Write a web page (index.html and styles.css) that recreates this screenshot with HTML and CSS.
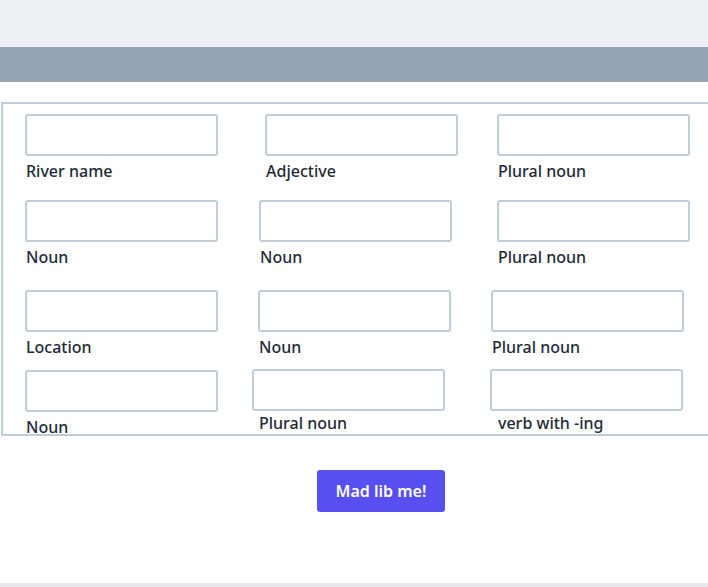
FILE: index.html
```html
<!DOCTYPE html>
<html>
<head>
<meta charset="utf-8">
<link rel="stylesheet" href="styles.css">
</head>
<body>
<div class="top"></div>
<div class="bar"></div>
<main class="main">
  <form class="box">
    <div class="row r1">
      <div class="field f1"><input class="inp" type="text"><label class="lab">River name</label></div>
      <div class="field f2"><input class="inp" type="text"><label class="lab">Adjective</label></div>
      <div class="field f3"><input class="inp" type="text"><label class="lab">Plural noun</label></div>
    </div>
    <div class="row r2">
      <div class="field f1"><input class="inp" type="text"><label class="lab">Noun</label></div>
      <div class="field f2"><input class="inp" type="text"><label class="lab">Noun</label></div>
      <div class="field f3"><input class="inp" type="text"><label class="lab">Plural noun</label></div>
    </div>
    <div class="row r3">
      <div class="field f1"><input class="inp" type="text"><label class="lab">Location</label></div>
      <div class="field f2"><input class="inp" type="text"><label class="lab">Noun</label></div>
      <div class="field f3"><input class="inp" type="text"><label class="lab">Plural noun</label></div>
    </div>
    <div class="row r4">
      <div class="field f1"><input class="inp" type="text"><label class="lab">Noun</label></div>
      <div class="field f2"><input class="inp" type="text"><label class="lab">Plural noun</label></div>
      <div class="field f3"><input class="inp" type="text"><label class="lab">verb with -ing</label></div>
    </div>
  </form>
  <div class="actions"><button class="btn" type="button">Mad lib me!</button></div>
</main>
<footer class="foot"></footer>
</body>
</html>
```
FILE: styles.css
```css
html, body { margin: 0; padding: 0; overflow: hidden; background: #fff; }
body { font-family: "Noto Sans", Roboto, sans-serif; color: #1f2a37; width: 708px; height: 587px; display: flex; flex-direction: column; }
.top { height: 47px; background: #edf1f6; flex: none; }
.bar { height: 35px; background: #94a3b1; flex: none; }
.main { width: 708px; padding-top: 20px; padding-left: 1px; flex: 1; box-sizing: border-box; overflow: hidden; }
.box { box-sizing: border-box; width: 760px; height: 334px; border: 2px solid #c2ccd6; overflow: hidden; padding: 10px 0 0 22px; display: grid; grid-template-rows: 86px 90px 80px auto; }
.row { display: flex; }
.field { display: flex; flex-direction: column; width: 193px; flex: none; }
.inp { box-sizing: border-box; width: 193px; height: 42px; border: 2px solid #c2ccd6; border-radius: 3px; background: #fff; margin: 0; padding: 0 8px; font: inherit; }
.lab { font-size: 16px; line-height: 20px; font-weight: 500; display: block; white-space: nowrap; }
.r1 .lab { margin-top: 5px; }
.r2 .lab { margin-top: 5px; }
.r3 .lab { margin-top: 5px; }
.r1 .f2 { margin-left: 47px; }
.r1 .f3 { margin-left: 39px; }
.r2 .f2 { margin-left: 41px; }
.r2 .f3 { margin-left: 45px; }
.r3 .f2 { margin-left: 40px; }
.r3 .f3 { margin-left: 40px; }
.r4 .f2 { margin-left: 34px; }
.r4 .f3 { margin-left: 45px; }
.r1 .lab, .r2 .lab, .r3 .lab { padding-left: 1px; }
.r4 .f1 .lab { margin-top: 5px; padding-left: 1px; }
.r4 .f2, .r4 .f3 { margin-top: -1px; }
.r4 .f2 .lab { margin-top: 2px; padding-left: 7px; }
.r4 .f3 .lab { margin-top: 2px; padding-left: 8px; }
.actions { width: 760px; display: flex; justify-content: center; padding-top: 34px; }
.btn { height: 42px; width: 128px; background: #574ff0; color: #fff; border: none; border-radius: 3px; font-family: inherit; font-size: 16px; font-weight: 600; padding: 0; }
.foot { height: 4px; background: #e5e7ec; flex: none; }
```
